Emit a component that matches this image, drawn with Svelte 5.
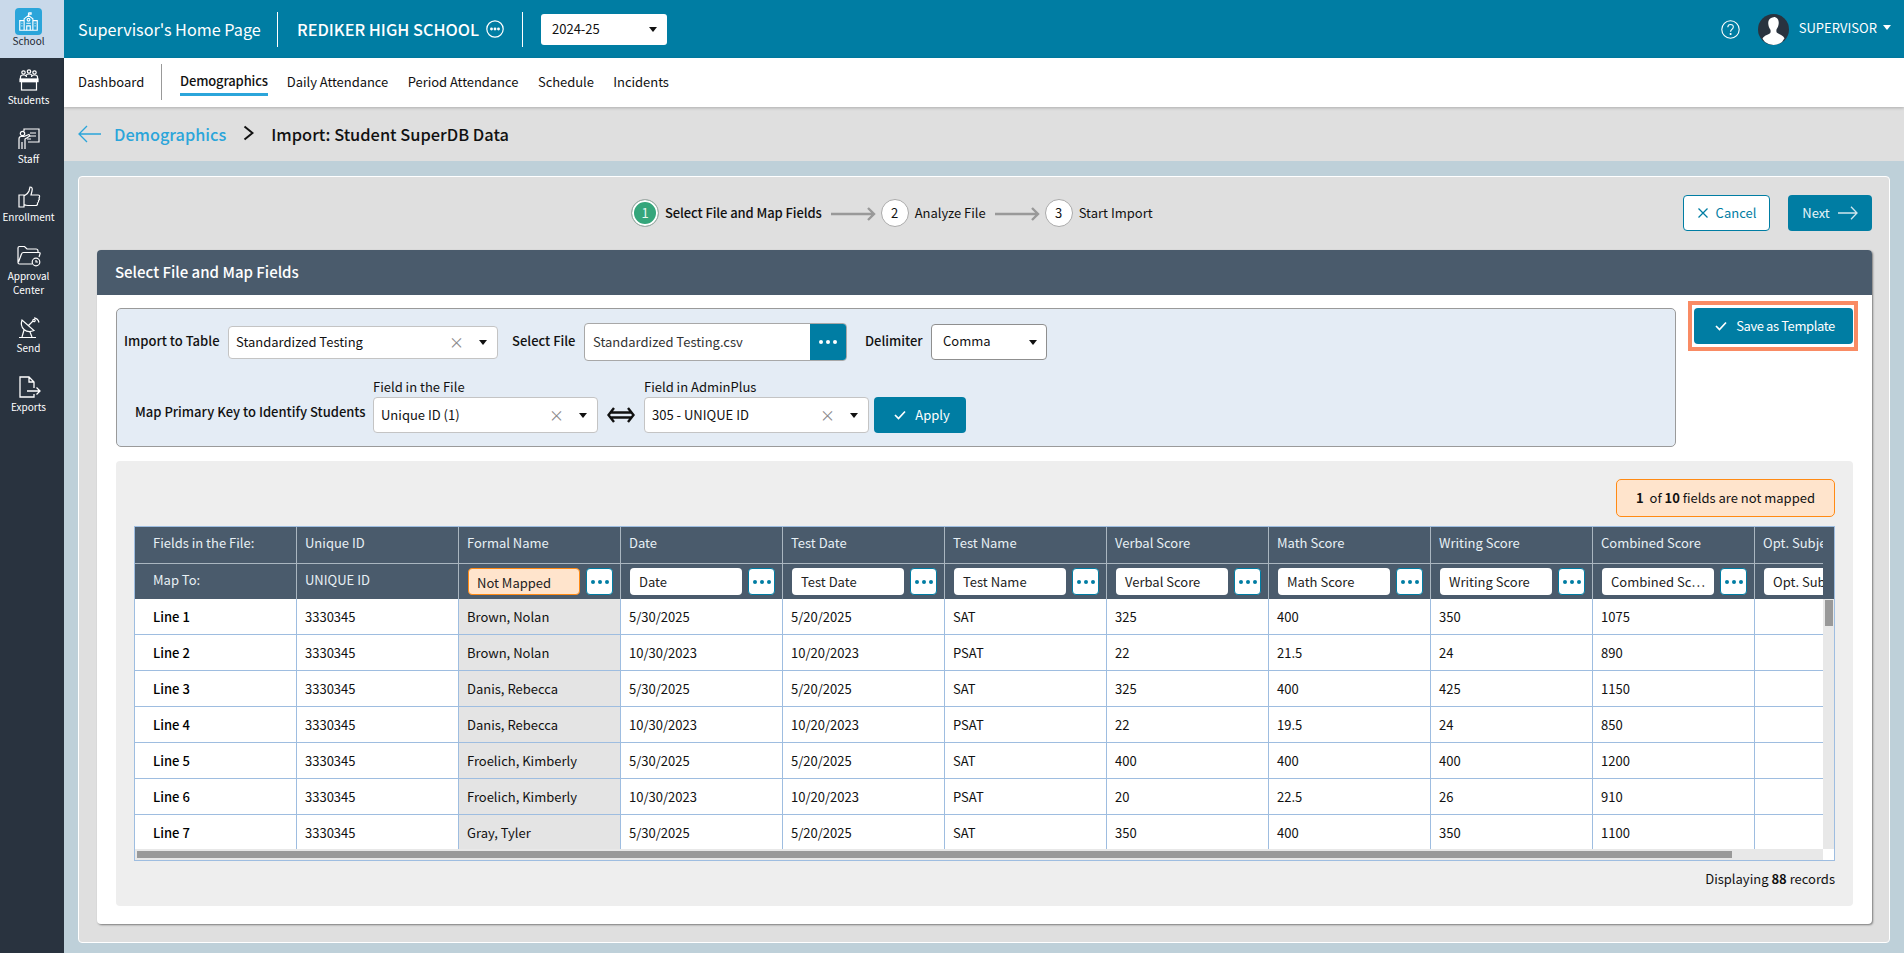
<script>
  const cols = [
    ['Formal Name', 'Not Mapped'], ['Date', 'Date'], ['Test Date', 'Test Date'], ['Test Name', 'Test Name'],
    ['Verbal Score', 'Verbal Score'], ['Math Score', 'Math Score'], ['Writing Score', 'Writing Score'],
    ['Combined Score', 'Combined Sc…'], ['Opt. Subject', 'Opt. Subject']
  ];
  const rows = [
    ['Brown, Nolan','5/30/2025','5/20/2025','SAT','325','400','350','1075',''],
    ['Brown, Nolan','10/30/2023','10/20/2023','PSAT','22','21.5','24','890',''],
    ['Danis, Rebecca','5/30/2025','5/20/2025','SAT','325','400','425','1150',''],
    ['Danis, Rebecca','10/30/2023','10/20/2023','PSAT','22','19.5','24','850',''],
    ['Froelich, Kimberly','5/30/2025','5/20/2025','SAT','400','400','400','1200',''],
    ['Froelich, Kimberly','10/30/2023','10/20/2023','PSAT','20','22.5','26','910',''],
    ['Gray, Tyler','5/30/2025','5/20/2025','SAT','350','400','350','1100','']
  ];
  const nav = ['Daily Attendance', 'Period Attendance', 'Schedule', 'Incidents'];
</script>

<div class="app">
  <aside class="side">
    <div class="s-school">
      <div class="tile">
        <svg width="21" height="21" viewBox="0 0 24 24" fill="none" stroke="#fff" stroke-width="1.3">
          <path d="M12 2v3M12 2h3v1.5h-3M7 9l5-4 5 4v13H7zM7 11H2v11h5M17 11h5v11h-5"/>
          <circle cx="12" cy="10" r="1.6"/>
          <path d="M10 22v-5h4v5M4 14h1M4 17h1M19 14h1M19 17h1M9.5 14h5"/>
        </svg>
      </div>
      <span>School</span>
    </div>
    <div class="s-item">
      <svg width="24" height="22" viewBox="0 0 24 22" fill="none" stroke="#fff" stroke-width="1.2">
        <circle cx="6.5" cy="3.5" r="1.7"/><circle cx="12" cy="2.5" r="1.7"/><circle cx="17.5" cy="3.5" r="1.7"/>
        <path d="M3.5 10V8q0-2 3-2t3 2M9 6.5q.5-1.500 3-1.500t3 1.500M14.500 8q0-2 3-2t3 2v2"/>
        <rect x="3" y="10" width="18" height="2.600" fill="#fff"/><rect x="4.500" y="12.600" width="15" height="8.400"/>
      </svg>
      <span>Students</span>
    </div>
    <div class="s-item">
      <svg width="24" height="22" viewBox="0 0 24 22" fill="none" stroke="#fff" stroke-width="1.2">
        <path d="M7 3V1h15v13H11M13 5h6M13 8h6M10 11h4"/>
        <circle cx="5.500" cy="5.500" r="2.200"/>
        <path d="M2 21V11q0-2.500 2-2.500h3l5-2 .8 1.500L8 11v10M5 21v-7"/>
      </svg>
      <span>Staff</span>
    </div>
    <div class="s-item">
      <svg width="24" height="22" viewBox="0 0 24 22" fill="none" stroke="#fff" stroke-width="1.2">
        <path d="M2 9h5v12H2zM7 10q4-2 5-5l1-4q3 0 2 4l-1 4h7q2 0 1.500 2l-.5 1q1 1.500-.5 2.500.5 2-1 2.500.5 2.500-2 2.500H11q-2 0-4-1"/>
      </svg>
      <span>Enrollment</span>
    </div>
    <div class="s-item tall">
      <svg width="24" height="22" viewBox="0 0 24 22" fill="none" stroke="#fff" stroke-width="1.2">
        <path d="M15 19H2.500q-1.500 0-1.500-1.500V3q0-1.500 1.500-1.500h5L10 4h9q2 0 2 2v1M1.500 17 4.500 9q.5-1.500 2-1.500H22q1.500 0 1 1.500l-1 3"/>
        <circle cx="19" cy="17" r="3.800" fill="#29333f"/><path d="M19 15v2h2"/>
      </svg>
      <span>Approval<br />Center</span>
    </div>
    <div class="s-item">
      <svg width="24" height="22" viewBox="0 0 24 22" fill="none" stroke="#fff" stroke-width="1.2">
        <path d="M5 3q-2 6 2 9.500t10 1zM11 9l5-5M7 13l-2 7M13 15l2 5M2 20.500h17"/>
        <circle cx="17" cy="3.500" r="1.200"/>
        <path d="M17 .8q4 .5 5 4.700"/>
      </svg>
      <span>Send</span>
    </div>
    <div class="s-item">
      <svg width="24" height="22" viewBox="0 0 24 22" fill="none" stroke="#fff" stroke-width="1.300">
        <path d="M17 12V6l-5-5H3v20h14v-3M12 1v5h5M10 15h13M19.500 11.500 23 15l-3.500 3.500"/>
      </svg>
      <span>Exports</span>
    </div>
  </aside>

  <div class="main">
    <header class="top">
      <span class="title">Supervisor's Home Page</span>
      <i class="vr"></i>
      <strong class="school">REDIKER HIGH SCHOOL</strong>
      <svg class="more" width="18" height="18" viewBox="0 0 18 18" fill="none" stroke="#fff" stroke-width="1.200">
        <circle cx="9" cy="9" r="8.200"/><circle cx="5.500" cy="9" r=".8" fill="#fff"/><circle cx="9" cy="9" r=".8" fill="#fff"/><circle cx="12.500" cy="9" r=".8" fill="#fff"/>
      </svg>
      <i class="vr vr2"></i>
      <div class="year"><span>2024-25</span><b class="caret"></b></div>
      <div class="user">
        <svg width="19" height="19" viewBox="0 0 19 19" fill="none" stroke="#fff" stroke-width="1.100">
          <circle cx="9.500" cy="9.500" r="8.700"/>
          <path d="M6.800 7.300q0-2.800 2.800-2.800t2.700 2.600q0 1.500-1.500 2.400-1.200.8-1.200 2.300"/>
          <circle cx="9.600" cy="14" r=".5" fill="#fff"/>
        </svg>
        <svg class="ava" width="31" height="31" viewBox="0 0 31 31">
          <circle cx="15.500" cy="15.500" r="15.500" fill="#29333f"/>
          <path d="M15.500 3.500c-4 0-5.500 3-5.200 6.500.2 2 .8 4 2 5.500.5 1 .5 3-.3 3.800-1.500 1.500-6 2-7.500 5.500L7 28q4 3 8.500 3t8.500-3l2.500-3.700c-1.500-3.500-6-4-7.500-5.500-.8-.8-.8-2.800-.3-3.800 1.200-1.500 1.800-3.500 2-5.500.3-3.500-1.200-6.500-5.200-6.500z" fill="#fff"/>
        </svg>
        <span class="uname">SUPERVISOR</span>
        <b class="caret white"></b>
      </div>
    </header>

    <nav class="nav">
      <span class="dash">Dashboard</span>
      <i class="navsep"></i>
      <span class="active">Demographics</span>
      {#each nav as n}<span class="link">{n}</span>{/each}
    </nav>

    <div class="crumb">
      <svg width="24" height="18" viewBox="0 0 24 18" fill="none" stroke="#2ba5da" stroke-width="1.300"><path d="M23 9H1M9 1 1 9l8 8"/></svg>
      <span class="c-link">Demographics</span>
      <svg class="chev" width="11" height="16" viewBox="0 0 11 16" fill="none" stroke="#111" stroke-width="2"><path d="m1.500 1.500 8 6.500-8 6.500"/></svg>
      <span class="c-now">Import: Student SuperDB Data</span>
    </div>

    <section class="stage">
      <div class="panel">
        <div class="steps-row">
          <div class="stepper">
            <span class="dot on">1</span><span class="st strong">Select File and Map Fields</span>
            <svg class="arr" width="45" height="14" viewBox="0 0 45 14" fill="none" stroke="#999" stroke-width="2.400"><path d="M0 7h43M37 1l6 6-6 6"/></svg>
            <span class="dot">2</span><span class="st">Analyze File</span>
            <svg class="arr" width="45" height="14" viewBox="0 0 45 14" fill="none" stroke="#999" stroke-width="2.400"><path d="M0 7h43M37 1l6 6-6 6"/></svg>
            <span class="dot">3</span><span class="st">Start Import</span>
          </div>
          <button class="btn ghost">
            <svg width="12" height="12" viewBox="0 0 12 12" fill="none" stroke="#007da3" stroke-width="1.300"><path d="m1.500 1.500 9 9M10.500 1.500l-9 9"/></svg>
            Cancel
          </button>
          <button class="btn next">
            Next
            <svg width="20" height="14" viewBox="0 0 20 14" fill="none" stroke="#cfe6ee" stroke-width="1.300"><path d="M0 7h19M13 .8 19 7l-6 6.200"/></svg>
          </button>
        </div>

        <div class="card">
          <div class="card-h">Select File and Map Fields</div>
          <div class="card-b">
            <div class="top-row">
              <div class="box">
                <div class="r1">
                  <label class="l-imp">Import to Table</label>
                  <div class="sel w270"><span>Standardized Testing</span><em>×</em><b class="caret"></b></div>
                  <label class="l-file">Select File</label>
                  <div class="file"><span>Standardized Testing.csv</span><div class="fdots"><u></u><u></u><u></u></div></div>
                  <label class="l-del">Delimiter</label>
                  <div class="sel w116 d"><span>Comma</span><b class="caret"></b></div>
                </div>
                <div class="r2">
                  <label class="l-map">Map Primary Key to Identify Students</label>
                  <div class="fld"><small>Field in the File</small><div class="sel w225"><span>Unique ID (1)</span><em>×</em><b class="caret"></b></div></div>
                  <div class="swap">
                    <svg width="28" height="16" viewBox="0 0 28 16" fill="none" stroke="#111" stroke-width="2.400"><path d="M7 1 1.500 8 7 15M21 1l5.500 7L21 15M4 5.500h20M4 10.500h20"/></svg>
                  </div>
                  <div class="fld"><small>Field in AdminPlus</small><div class="sel w225"><span>305 - UNIQUE ID</span><em>×</em><b class="caret"></b></div></div>
                  <button class="btn apply">
                    <svg width="12" height="10" viewBox="0 0 12 10" fill="none" stroke="#fff" stroke-width="1.700"><path d="m1 5 3.500 3.500L11 1.500"/></svg>
                    Apply
                  </button>
                </div>
              </div>
              <div class="save-ring">
                <button class="btn save">
                  <svg width="12" height="10" viewBox="0 0 12 10" fill="none" stroke="#fff" stroke-width="1.700"><path d="m1 5 3.500 3.500L11 1.500"/></svg>
                  Save as Template
                </button>
              </div>
            </div>

            <div class="gray">
              <div class="badge"><b>1</b>&nbsp; of <b>10</b>&nbsp;fields are not mapped</div>
              <div class="table">
                <div class="head">
                  <div class="hrow">
                    <div class="hc first">Fields in the File:</div>
                    <div class="hc">Unique ID</div>
                    {#each cols as c}<div class="hc">{c[0]}</div>{/each}
                  </div>
                  <div class="hrow second">
                    <div class="hc first">Map To:</div>
                    <div class="hc">UNIQUE ID</div>
                    {#each cols as c, i}
                      <div class="hc inp">
                        <div class="minput" class:warn={i === 0}>{c[1]}</div>
                        <div class="mdots"><u></u><u></u><u></u></div>
                      </div>
                    {/each}
                  </div>
                </div>
                <div class="bodywrap">
                  <div class="rows">
                    {#each rows as r, i}
                      <div class="row">
                        <div class="c first">Line {i + 1}</div>
                        <div class="c">3330345</div>
                        {#each r as v, j}<div class="c" class:shade={j === 0}>{v}</div>{/each}
                      </div>
                    {/each}
                  </div>
                  <div class="vbar"><i></i></div>
                </div>
                <div class="hbar"><div class="htrack"><i></i></div><div class="corner"></div></div>
              </div>
              <div class="count">Displaying <b>88</b> records</div>
            </div>
          </div>
        </div>
      </div>
    </section>
  </div>
</div>

<style>
  :global(body) { margin: 0; }
  * { box-sizing: border-box; }
  .app {
    display: flex; width: 1904px; height: 953px; overflow: hidden;
    font-family: "Noto Sans CJK SC", "Source Sans Pro", "Noto Sans", sans-serif;
    font-size: 13px; line-height: 18px; color: #111;
  }
  .side { width: 64px; flex: none; background: #29333f; color: #fff; font-size: 10px; line-height: 14px; text-align: center; }
  .s-school { height: 58px; background: #c9d9ea; color: #1b2530; padding: 8px 7px 0 0; display: flex; flex-direction: column; align-items: center; }
  .tile { width: 27px; height: 27px; background: #2ba5da; border-radius: 4px; display: flex; align-items: center; justify-content: center; flex: none; }
  .s-school span { margin-top: -1px; }
  .s-item { height: 58.6px; padding: 11px 7px 0 0; display: flex; flex-direction: column; align-items: center; gap: 2px; white-space: nowrap; }
  .s-item.tall { height: 72.6px; }
  .main { flex: 1; display: flex; flex-direction: column; min-width: 0; background: #bed0d9; }
  .top { height: 58px; background: #007da3; display: flex; align-items: center; color: #fff; padding-left: 14px; flex: none; }
  .title { font-size: 16.2px; width: 199px; white-space: nowrap; }
  .vr { width: 1px; height: 35px; background: #fff; flex: none; }
  .school { font-size: 16.3px; font-weight: 500; margin-left: 19px; width: 189px; white-space: nowrap; }
  .more { flex: none; }
  .vr2 { margin-left: 18px; }
  .year { width: 126px; height: 31px; background: #fff; border-radius: 3px; color: #111; margin-left: 18px; display: flex; align-items: center; justify-content: space-between; padding: 0 10px 0 11px; }
  .caret { display: block; width: 0; height: 0; border: 4.500px solid transparent; border-top: 5px solid #111; border-bottom: 0; flex: none; }
  .caret.white { border-top-color: #fff; }
  .user { margin-left: auto; display: flex; align-items: center; padding-right: 13px; }
  .ava { margin-left: 18px; }
  .uname { margin-left: 10px; margin-top: -3px; }
  .user .caret { margin: -3px 0 0 6px; }

  .nav { height: 49px; background: #fff; display: flex; align-items: center; padding: 0 0 2px 14px; box-shadow: 0 1px 3px rgba(0,0,0,.22); flex: none; position: relative; }
  .dash { width: 83px; }
  .navsep { width: 1px; height: 36px; background: #999; margin-right: 18px; }
  .active { font-weight: 500; height: 29px; line-height: 28px; border-bottom: 3px solid #2ba5da; margin-right: 19px; letter-spacing: -.15px; }
  .link { margin-right: 19.500px; letter-spacing: -.05px; }

  .crumb { height: 54px; background: #dfdfdf; display: flex; align-items: center; padding-left: 14px; flex: none; }
  .c-link { font-size: 16.3px; color: #2ba5da; font-weight: 500; margin-left: 12px; }
  .chev { margin-left: 17px; margin-top: -3px; }
  .c-now { font-size: 16.4px; font-weight: 500; margin-left: 17px; }

  .stage { flex: 1; min-height: 0; padding: 15px 14px 10px 14px; }
  .panel { height: 100%; background: #dfdfdf; border: 1px solid #fff; border-radius: 4px; padding: 0 17px 18px 18px; display: flex; flex-direction: column; }
  .steps-row { height: 73px; flex: none; display: flex; align-items: center; padding-bottom: 2px; }
  .stepper { display: flex; align-items: center; margin-left: 534px; }
  .dot { width: 28px; height: 28px; border-radius: 50%; background: #fff; border: 1px solid #aaa; display: flex; align-items: center; justify-content: center; flex: none; }
  .dot.on { background: #35a67b; color: #e8f7f0; box-shadow: inset 0 0 0 2px #fff; }
  .st { margin-left: 6px; white-space: nowrap; }
  .st.strong { font-weight: 500; letter-spacing: -.1px; }
  .arr { margin: 2px 5px 0 9px; flex: none; }
  .btn { font: inherit; border: 0; border-radius: 4px; background: #007da3; color: #fff; display: flex; align-items: center; justify-content: center; height: 36px; gap: 8px; padding: 0; }
  .ghost { width: 87px; background: #fff; border: 1px solid #007da3; color: #007da3; margin-left: auto; gap: 7px; }
  .next { width: 84px; margin-left: 18px; gap: 8px; color: #e6f5fa; }

  .card { flex: 1; min-height: 0; background: #fff; border-radius: 4px; box-shadow: 1px 1px 2px rgba(0,0,0,.45); overflow: hidden; }
  .card-h { height: 45px; background: #4a5b6c; color: #fff; font-size: 15px; font-weight: 500; line-height: 43px; padding-left: 18px; }
  .card-b { padding: 13px 19px; }
  .top-row { display: flex; align-items: flex-start; height: 153px; }
  .box { width: 1560px; height: 139px; flex: none; background: #e4ecf5; border: 1px solid #9a9a9a; border-radius: 5px; padding: 14px 0 0 7px; }
  .r1 { display: flex; align-items: center; height: 38px; }
  label { font-weight: 500; white-space: nowrap; }
  .l-imp { width: 104px; margin-bottom: 2px; }
  .l-file { width: 72px; margin: 0 0 2px 14px; }
  .l-del { width: 66px; margin: 0 0 2px 18px; }
  .sel { height: 33px; background: #fff; border: 1px solid #c4c4c4; border-radius: 4px; display: flex; align-items: center; padding: 0 10px 0 7px; flex: none; }
  .sel span { flex: 1; white-space: nowrap; }
  .sel em { font-style: normal; color: #8a8a8a; font-size: 15px; margin-right: 15px; font-weight: 400; line-height: 18px; }
  .w270 { width: 270px; }
  .w116 { width: 116px; padding: 0 9px 0 11px; }
  .d { height: 36px; border-color: #8f8f8f; }
  .d span { padding-bottom: 2px; }
  .w225 { width: 225px; height: 36px; }
  .file { width: 263px; height: 38px; background: #fff; border: 1px solid #a8a8a8; border-radius: 4px; display: flex; align-items: center; overflow: hidden; padding-left: 8px; flex: none; }
  .file span { flex: 1; color: #333; white-space: nowrap; padding-bottom: 1px; }
  .fdots { width: 36px; height: 100%; background: #007da3; display: flex; align-items: center; justify-content: center; gap: 3px; }
  u { display: block; width: 4px; height: 4px; border-radius: 50%; background: #fff; }
  .r2 { display: flex; align-items: flex-end; margin-top: 17px; padding-left: 11px; }
  .l-map { width: 238px; padding-bottom: 12px; }
  .fld { display: flex; flex-direction: column; }
  .fld small { font-size: 13px; line-height: 18px; margin-bottom: 1px; }
  .swap { width: 46px; height: 36px; display: flex; align-items: center; justify-content: center; }
  .apply { width: 92px; margin-left: 5px; height: 36px; padding-left: 4px; gap: 9px; }
  .save-ring { margin: -7px 0 0 12px; width: 170px; height: 50px; border: 4px solid #f98b64; padding: 3px 1px 2px 2px; flex: none; background: #fff; }
  .save { width: 159px; height: 36px; gap: 9px; letter-spacing: -.4px; padding-left: 3px; }

  .gray { height: 445px; background: #eee; border-radius: 4px; padding: 18px 18px 0 18px; display: flex; flex-direction: column; align-items: flex-end; }
  .badge { width: 219px; height: 38px; background: #ffe4cc; border: 1px solid #ff8a14; border-radius: 5px; display: flex; align-items: center; justify-content: center; flex: none; white-space: pre; }
  b { font-weight: 700; }
  .table { width: 1701px; height: 335px; margin-top: 9px; border: 1px solid #9ebde0; display: flex; flex-direction: column; background: #fff; flex: none; overflow: hidden; }
  .head { background: #4a5b6c; color: #e8f0f5; flex: none; padding-right: 11px; height: 72px; }
  .hrow { display: flex; height: 36px; width: 1688px; overflow: hidden; }
  .hrow.second { border-top: 1px solid #aab6c0; }
  .hc { flex: 0 0 162px; border-right: 1px solid #aab6c0; padding-left: 8px; line-height: 32px; white-space: nowrap; overflow: hidden; }
  .hc.first { padding-left: 18px; }
  .hc.inp { display: flex; padding: 4px 0 0 9px; gap: 6px; line-height: 27px; }
  .minput { width: 112px; height: 27px; background: #fff; color: #222; border-radius: 4px; padding: 0 2px 0 9px; white-space: nowrap; overflow: hidden; flex: none; }
  .minput.warn { background: #ffe4cc; border: 1px solid #ff8a14; padding-left: 8px; line-height: 27px; }
  .mdots { width: 27px; height: 27px; background: #fff; border: 1px solid #007da3; border-radius: 4px; display: flex; align-items: center; justify-content: center; gap: 3px; flex: none; }
  .mdots u { background: #007da3; width: 4px; height: 4px; }
  .bodywrap { height: 250px; display: flex; flex: none; overflow: hidden; }
  .rows { width: 1688px; overflow: hidden; flex: none; }
  .row { display: flex; height: 36px; border-bottom: 1px solid #9ebde0; }
  .c { flex: 0 0 162px; border-right: 1px solid #9ebde0; padding-left: 8px; line-height: 35px; white-space: nowrap; }
  .c.first { padding-left: 18px; font-weight: 500; color: #000; }
  .c.shade { background: #e4e4e4; }
  .vbar { width: 11px; background: #e8e8e8; flex: none; padding: 1px 1px 0 2px; }
  .vbar i { display: block; height: 26px; background: #999; }
  .hbar { height: 11px; display: flex; flex: none; }
  .htrack { width: 1688px; background: #e8e8e8; padding: 2px 0 2px 2px; }
  .htrack i { display: block; width: 1595px; height: 7px; background: #999; }
  .corner { flex: 1; background: #fff; }
  .count { margin-top: 9px; line-height: 18px; }
</style>
